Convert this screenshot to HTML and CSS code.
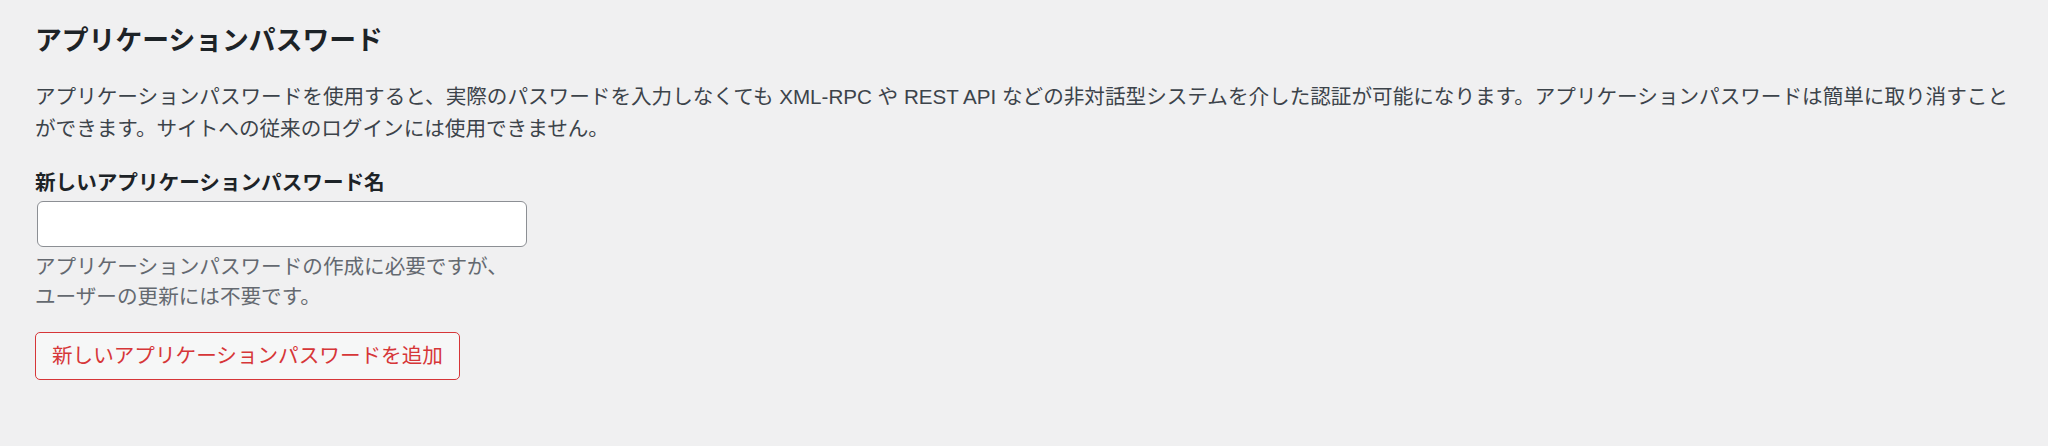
FILE: index.html
```html
<!DOCTYPE html>
<html lang="ja">
<head>
  <meta charset="UTF-8">
  <title>アプリケーションパスワード</title>
  <link rel="stylesheet" href="styles.css">
</head>
<body>
  <div class="wrap">
    <h2>アプリケーションパスワード</h2>
    <p class="intro">アプリケーションパスワードを使用すると、実際のパスワードを入力しなくても XML-RPC や REST API などの非対話型システムを介した認証が可能になります。アプリケーションパスワードは簡単に取り消すことができます。サイトへの従来のログインには使用できません。</p>

    <div class="create-form">
      <label for="new-app-name">新しいアプリケーションパスワード名</label>
      <input type="text" id="new-app-name" class="input">
      <p class="description">アプリケーションパスワードの作成に必要ですが、<br>ユーザーの更新には不要です。</p>
      <button type="button" class="button">新しいアプリケーションパスワードを追加</button>
    </div>
  </div>
</body>
</html>
```

FILE: styles.css
```css
/* アプリケーションパスワード設定 */
body {
  margin: 0;
  padding: 0;
  background-color: #f0f0f1;
  color: #3c434a;
  font-family: "Liberation Sans", "Noto Sans CJK JP", sans-serif;
  font-size: 20.6px;
  line-height: 31.5px;
}
.wrap {
  padding: 0 35px;
}
h2 {
  margin: 23px 0 0;
  font-size: 26.8px;
  line-height: 36px;
  font-weight: 700;
  color: #1d2327;
}
.intro {
  margin: 22px 0 0;
}
.create-form {
  display: flex;
  flex-direction: column;
  align-items: flex-start;
  margin-top: 23px;
}
.create-form label {
  font-weight: 700;
  color: #1d2327;
  margin-bottom: 2px;
}
.input {
  box-sizing: border-box;
  width: 490px;
  height: 46px;
  margin: 0 1.5px;
  padding: 0 12px;
  border: 1px solid #8c8f94;
  border-radius: 6px;
  background-color: #fff;
  font: inherit;
}
.description {
  margin: 5px 0 0;
  color: #646970;
  line-height: 30.5px;
}
.button {
  box-sizing: border-box;
  height: 48px;
  margin-top: 19px;
  padding: 0 16px;
  border: 1.5px solid #d63638;
  border-radius: 5px;
  background-color: #f6f7f7;
  color: #d63638;
  font: inherit;
  cursor: pointer;
}
```
